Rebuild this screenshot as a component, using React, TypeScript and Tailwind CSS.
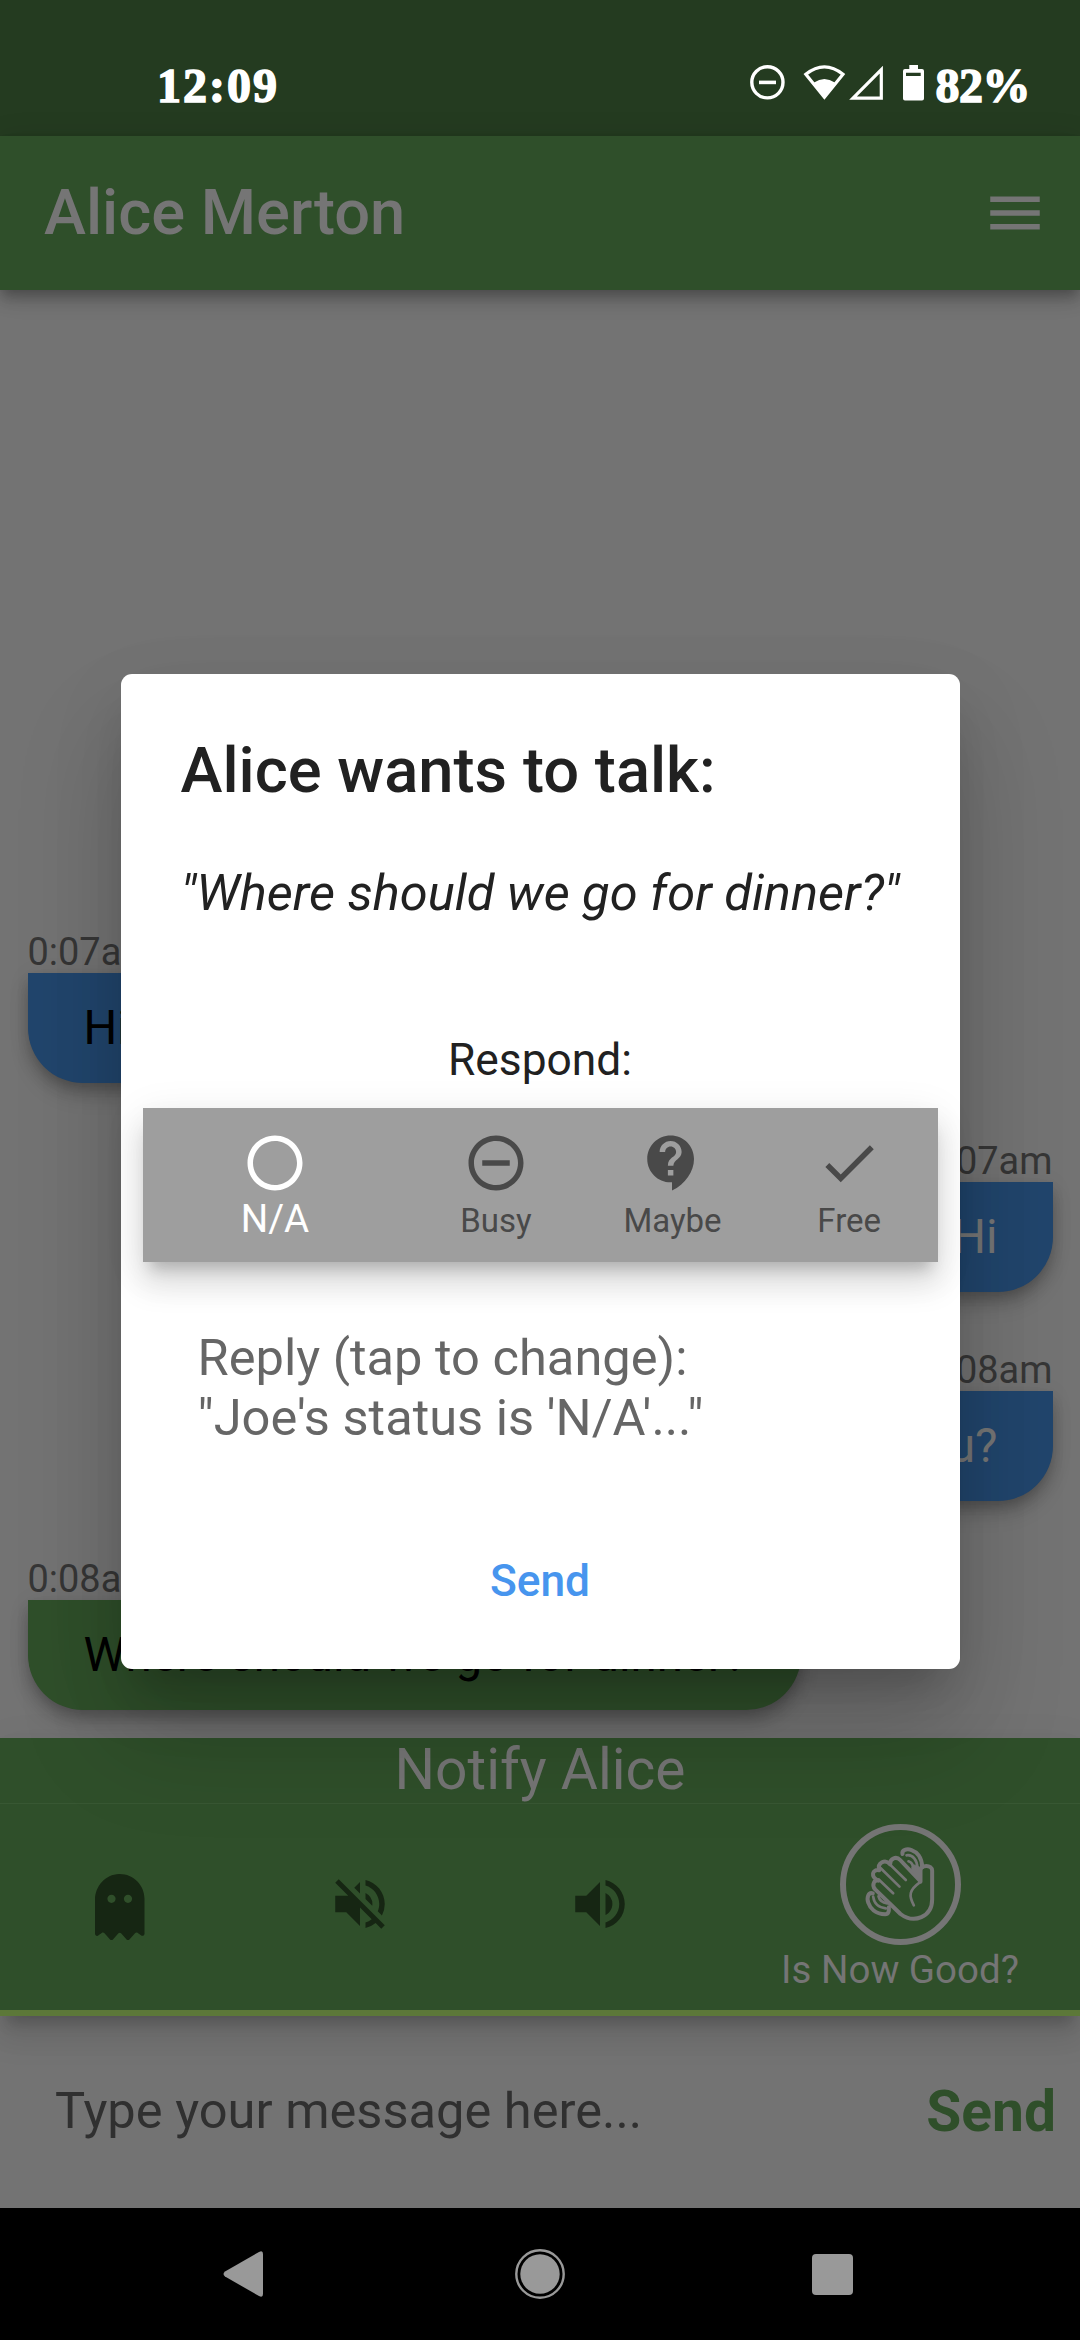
import type { ReactNode } from "react";
import { MdCheck, MdContactSupport, MdMenu, MdRemoveCircleOutline, MdRadioButtonUnchecked, MdVolumeOff, MdVolumeUp } from "react-icons/md";
import { FaGhost } from "react-icons/fa";

function StatusBar() {
  return (
    <div className="flex h-[136px] shrink-0 items-start bg-[#243b20] text-white">
      <span className="ml-[157px] mt-[60px] font-['Liberation_Serif'] text-[48px] leading-[52px] font-bold tracking-[2px] [-webkit-text-stroke:1.5px_white]">12:09</span>
      <svg className="mt-[60px] ml-auto h-[46px] w-[180px] shrink-0" viewBox="745 60 180 46">
        <circle cx="766.4" cy="82.3" r="15.6" fill="none" stroke="white" strokeWidth="3.4" />
        <path d="M758 80.6h17v3.6h-17z" fill="white" />
        <path d="M804.8 74.3Q823.4 59.5 842 74.3L823.4 97.2Z" fill="none" stroke="white" strokeWidth="3.2" />
        <path d="M813 82.5Q823.4 75.5 833.8 82.5L823.4 99Z" fill="white" />
        <path d="M852 98.1H880.3V69.6Z" fill="none" stroke="white" strokeWidth="3.2" />
        <path fillRule="evenodd" d="M908.3 65h8.7v4h4q2 0 2 2v27.500q0 2-2 2h-17q-2 0-2-2V71q0-2 2-2h4.300zM905 72.700h14.700v3.300H905z" fill="white" />
      </svg>
      <span className="mt-[60px] mr-[50px] ml-[10px] font-['Liberation_Serif'] text-[48px] leading-[52px] font-bold tracking-[-0.5px] [-webkit-text-stroke:1.5px_white]">82%</span>
    </div>
  );
}

function AppBar() {
  return (
    <header className="relative z-10 flex h-[154px] shrink-0 items-center justify-between bg-[#2f4f2a] pr-[32.5px] pl-[44px] text-[#757575] shadow-[0_6px_11px_-3px_rgba(0,0,0,0.2),0_11px_14px_rgba(0,0,0,0.14),0_3px_28px_rgba(0,0,0,0.12)]">
      <h1 className="pb-[2px] text-[63.25px] font-medium">Alice Merton</h1>
      <MdMenu className="size-[66px]" />
    </header>
  );
}

type MessageProps = { time: string; text: string; mine?: boolean; notice?: boolean };

function Message({ time, text, mine, notice }: MessageProps) {
  return (
    <div className={`flex h-[209px] shrink-0 flex-col ${mine ? "items-end text-[#757575]" : "items-start text-black"}`}>
      <span className="h-[51px] pt-[6px] text-[37.95px] leading-[48px] text-[#363636]">{time}</span>
      <div className={`flex h-[110px] items-center rounded-b-[55px] pr-[55px] pl-[56px] pt-[2px] text-[47.4px] shadow-[0_8px_14px_-3px_rgba(0,0,0,0.2),0_14px_20px_rgba(0,0,0,0.12),0_3px_22px_rgba(0,0,0,0.08)] ${notice ? "bg-[#2f4f2a]" : "bg-[#21456c]"}`}>
        {text}
      </div>
    </div>
  );
}

function WavingHand() {
  return (
    <svg className="size-[121px]" viewBox="0 0 121 121" fill="none" stroke="currentColor" strokeLinecap="round" strokeLinejoin="round">
      <circle cx="60.5" cy="60.5" r="57.500" strokeWidth="6" />
      <g transform="translate(10.5 6) scale(0.3333)" strokeWidth="12">
        <path d="M210 155V122C210 103 245 103 245 122V208C245 262 190 282 150 252L74 178C62 164 72 148 84 152C58 140 66 116 86 121C80 98 104 86 119 103C118 84 138 78 149 90L208 152" />
        <path d="M84 148L128 190M90 114L147 170M118 103L166 150" strokeWidth="8" />
        <path d="M180 120L210 152V112L190 104Z" fill="currentColor" strokeWidth="2" />
        <path d="M208 157C176 180 174 196 190 226" strokeWidth="8" />
        <path d="M156 72C151 49 214 50 215 112" />
        <path d="M168 76C187 73 200 90 201 114M174 94C183 97 188 105 188 116" strokeWidth="8" />
        <path d="M67 190C40 182 45 252 104 253C114 253 116 244 115 232" />
        <path d="M68 200C71 221 83 233 106 235M84 199C87 211 94 218 110 220" strokeWidth="8" />
      </g>
    </svg>
  );
}

function NotifyPanel() {
  return (
    <section className="relative z-10 flex h-[278.500px] shrink-0 flex-col border-b-[6px] border-[#5c7838] bg-[#2f4f2a] shadow-[0_14px_14px_-8px_rgba(0,0,0,0.2),0_22px_28px_3px_rgba(0,0,0,0.08),0_8px_38px_6px_rgba(0,0,0,0.04)]">
      <div className="flex h-[66px] items-center justify-center border-b border-[#385733] text-[56.9px] leading-none text-[#757575]">Notify Alice</div>
      <div className="grid flex-1 grid-cols-[2fr_2fr_2fr_3fr] text-[#162613]">
        <div className="flex justify-center pt-[70px]"><FaGhost className="h-[66px] w-[49.5px]" /></div>
        <div className="flex justify-center pt-[67px]"><MdVolumeOff className="size-[66px]" /></div>
        <div className="flex justify-center pt-[67px]"><MdVolumeUp className="size-[66px]" /></div>
        <div className="flex flex-col items-center pt-[20px] text-[#757575]">
          <WavingHand />
          <span className="mt-[1px] text-[38.5px] leading-[48px]">Is Now Good?</span>
        </div>
      </div>
    </section>
  );
}

function Composer() {
  return (
    <div className="flex h-[192px] shrink-0 items-center justify-between pr-[24px] pl-[55px]">
      <span className="pb-[3px] text-[50.6px] text-[#303030]">Type your message here...</span>
      <span className="text-[56.9px] font-bold text-[#2f4f2a]">Send</span>
    </div>
  );
}

function NavigationBar() {
  return (
    <nav className="flex h-[132px] shrink-0 items-center bg-black pl-[223px] text-[#999]">
      <svg className="h-[46px] w-[40px]" viewBox="0 0 40 46" fill="currentColor"><path d="M2 20.500L36 1q4-2 4 2v40q0 4-4 2L2 25.500q-3-2.500 0-5z" /></svg>
      <svg className="ml-[252px] size-[50px]" viewBox="0 0 50 50"><circle cx="25" cy="25" r="23.700" fill="none" stroke="currentColor" strokeWidth="2.400" /><circle cx="25" cy="25" r="19.700" fill="currentColor" /></svg>
      <div className="ml-[247px] size-[41px] rounded-[4px] bg-[#999]" />
    </nav>
  );
}

function Choice({ label, selected, children }: { label: string; selected?: boolean; children: ReactNode }) {
  return (
    <button className={`flex flex-col items-center pt-[22px] ${selected ? "text-[38.5px] text-white" : "text-[33px] text-[#494949]"}`}>
      {children}
      <span className={`leading-[46px] ${selected ? "" : "pt-[2px]"}`}>{label}</span>
    </button>
  );
}

function TalkDialog() {
  return (
    <div role="dialog" className="absolute top-[674px] left-[120.5px] z-20 flex h-[994.5px] w-[839px] flex-col rounded-[11px] bg-white text-[#212121] shadow-[0_30px_41px_-19px_rgba(0,0,0,0.2),0_66px_104px_8px_rgba(0,0,0,0.14),0_25px_80px_6px_rgba(0,0,0,0.06)]">
      <h2 className="mt-[59px] ml-[60px] text-[63.25px] leading-[74px] font-medium">Alice wants to talk:</h2>
      <p className="mt-[56px] ml-[60px] text-[50.6px] leading-[60px] whitespace-nowrap italic">"Where should we go for dinner?"</p>
      <p className="mt-[111px] text-center text-[44.3px] leading-[52px]">Respond:</p>
      <div className="mx-[22px] mt-[22px] grid h-[154px] shrink-0 grid-cols-[3fr_2fr_2fr_2fr] bg-[#9e9e9e] shadow-[0_14px_14px_-8px_rgba(0,0,0,0.2),0_22px_28px_3px_rgba(0,0,0,0.1),0_8px_38px_2px_rgba(0,0,0,0.08)]">
        <Choice label="N/A" selected><MdRadioButtonUnchecked className="size-[66px]" /></Choice>
        <Choice label="Busy"><MdRemoveCircleOutline className="size-[66px]" /></Choice>
        <Choice label="Maybe"><MdContactSupport className="size-[66px]" /></Choice>
        <Choice label="Free"><MdCheck className="size-[66px]" /></Choice>
      </div>
      <p className="mt-[66px] ml-[77px] text-[50.6px] leading-[60px] text-[#666]">Reply (tap to change):<br />"Joe's status is 'N/A'..."</p>
      <button className="mt-[107px] text-[44.3px] leading-[52px] font-medium text-[#4795ee]">Send</button>
    </div>
  );
}

export default function App() {
  return (
    <main className="relative flex h-[2340px] w-[1080px] flex-col overflow-hidden bg-[#737373] font-['Roboto',sans-serif]">
      <StatusBar />
      <AppBar />
      <div className="flex h-[1447.5px] shrink-0 flex-col px-[27.5px] pt-[632px]">
        <Message time="0:07am" text="Hi" />
        <Message time="0:07am" text="Hi" mine />
        <Message time="0:08am" text="How are you?" mine />
        <Message time="0:08am" text="Where should we go for dinner?" notice />
      </div>
      <NotifyPanel />
      <Composer />
      <NavigationBar />
      <TalkDialog />
    </main>
  );
}
